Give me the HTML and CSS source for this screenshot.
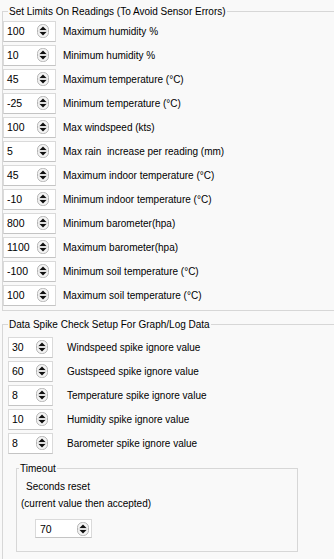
FILE: index.html
```html
<!DOCTYPE html>
<html lang="en">
<head>
  <meta charset="UTF-8">
  <title>Reading limits</title>
  <link rel="stylesheet" href="styles.css">
</head>
<body>
  <svg width="0" height="0" class="defs">
    <symbol id="spin" viewBox="0 0 12 14">
      <rect x="0.5" y="0.5" width="11" height="13" rx="5" fill="#f4f4f4" stroke="#b4b4b4" stroke-width="1"/>
      <path d="M2.5 6 L9.5 6 L6 2.5 Z" fill="#111"/>
      <path d="M2.5 8 L9.5 8 L6 11.5 Z" fill="#111"/>
      <line x1="1.5" y1="7" x2="10.5" y2="7" stroke="#c8c8c8" stroke-width="1"/>
    </symbol>
  </svg>

  <div class="group limits">
    <div class="group-title">Set Limits On Readings (To Avoid Sensor Errors)</div>
    <div class="rows">
      <div class="row"><div class="spin"><span class="val">100</span><svg class="arrows"><use href="#spin"/></svg></div><span class="label">Maximum humidity %</span></div>
      <div class="row"><div class="spin"><span class="val">10</span><svg class="arrows"><use href="#spin"/></svg></div><span class="label">Minimum humidity %</span></div>
      <div class="row"><div class="spin"><span class="val">45</span><svg class="arrows"><use href="#spin"/></svg></div><span class="label">Maximum temperature (°C)</span></div>
      <div class="row"><div class="spin"><span class="val">-25</span><svg class="arrows"><use href="#spin"/></svg></div><span class="label">Minimum temperature (°C)</span></div>
      <div class="row"><div class="spin"><span class="val">100</span><svg class="arrows"><use href="#spin"/></svg></div><span class="label">Max windspeed (kts)</span></div>
      <div class="row"><div class="spin"><span class="val">5</span><svg class="arrows"><use href="#spin"/></svg></div><span class="label">Max rain&nbsp; increase per reading (mm)</span></div>
      <div class="row"><div class="spin"><span class="val">45</span><svg class="arrows"><use href="#spin"/></svg></div><span class="label">Maximum indoor temperature (°C)</span></div>
      <div class="row"><div class="spin"><span class="val">-10</span><svg class="arrows"><use href="#spin"/></svg></div><span class="label">Minimum indoor temperature (°C)</span></div>
      <div class="row"><div class="spin"><span class="val">800</span><svg class="arrows"><use href="#spin"/></svg></div><span class="label">Minimum barometer(hpa)</span></div>
      <div class="row"><div class="spin"><span class="val">1100</span><svg class="arrows"><use href="#spin"/></svg></div><span class="label">Maximum barometer(hpa)</span></div>
      <div class="row"><div class="spin"><span class="val">-100</span><svg class="arrows"><use href="#spin"/></svg></div><span class="label">Minimum soil temperature (°C)</span></div>
      <div class="row"><div class="spin"><span class="val">100</span><svg class="arrows"><use href="#spin"/></svg></div><span class="label">Maximum soil temperature (°C)</span></div>
    </div>
  </div>

  <div class="group spikes">
    <div class="group-title">Data Spike Check Setup For Graph/Log Data</div>
    <div class="rows">
      <div class="row"><div class="spin"><span class="val">30</span><svg class="arrows"><use href="#spin"/></svg></div><span class="label">Windspeed spike ignore value</span></div>
      <div class="row"><div class="spin"><span class="val">60</span><svg class="arrows"><use href="#spin"/></svg></div><span class="label">Gustspeed spike ignore value</span></div>
      <div class="row"><div class="spin"><span class="val">8</span><svg class="arrows"><use href="#spin"/></svg></div><span class="label">Temperature spike ignore value</span></div>
      <div class="row"><div class="spin"><span class="val">10</span><svg class="arrows"><use href="#spin"/></svg></div><span class="label">Humidity spike ignore value</span></div>
      <div class="row"><div class="spin"><span class="val">8</span><svg class="arrows"><use href="#spin"/></svg></div><span class="label">Barometer spike ignore value</span></div>
    </div>

    <div class="group timeout">
      <div class="group-title">Timeout</div>
      <div class="note seconds">Seconds reset</div>
      <div class="note accepted">(current value then accepted)</div>
      <div class="spin"><span class="val">70</span><svg class="arrows"><use href="#spin"/></svg></div>
    </div>
  </div>
</body>
</html>
```

FILE: styles.css
```css
* {
  margin: 0;
  padding: 0;
  box-sizing: border-box;
}

html, body {
  width: 334px;
  height: 559px;
  overflow: hidden;
  background: #f9f9f9;
  color: #000;
  font-family: "Liberation Sans", Arial, sans-serif;
  font-size: 10px;
}

.defs {
  position: absolute;
}

.group {
  border: 1px solid #d7d7d7;
}

.group-title {
  display: table;
  margin: -6px 0 0 5px;
  padding: 0 1px;
  line-height: 12px;
  background: #f9f9f9;
}

.limits {
  width: 345px;
  margin: 11px 0 0 2px;
  padding-bottom: 3px;
}

.limits .rows {
  padding-top: 1px;
}

.spikes {
  width: 345px;
  margin: 13px 0 0 2px;
  padding-bottom: 7px;
  border-bottom: none;
}

.spikes .rows {
  padding-top: 4px;
}

.row {
  display: flex;
  align-items: center;
  height: 24px;
}

.spin {
  display: flex;
  align-items: center;
  height: 21px;
  background: #fff;
  border: 1px solid #dadada;
  border-bottom-color: #c4c4c4;
}

.val {
  flex: 1;
  padding-left: 3px;
  font-size: 10.5px;
}

.arrows {
  width: 12px;
  height: 14px;
}

.limits .spin {
  width: 53px;
}

.limits .arrows {
  margin-right: 6px;
}

.limits .label {
  margin-left: 7px;
}

.spikes .rows .spin {
  width: 45px;
  margin-left: 5px;
}

.spikes .rows .arrows {
  margin-right: 4px;
}

.spikes .label {
  margin-left: 14px;
}

.timeout {
  width: 282px;
  margin: 13px 0 0 13px;
  padding-bottom: 13px;
}

.timeout .group-title {
  margin-left: 2px;
}

.note {
  line-height: 14px;
  padding-left: 4px;
}

.seconds {
  margin-top: 5px;
  padding-left: 9px;
}

.accepted {
  margin-top: 3px;
}

.timeout .spin {
  width: 57px;
  height: 19px;
  margin: 8px 0 0 18px;
}

.timeout .val {
  padding-left: 4px;
}

.timeout .arrows {
  margin-right: 2px;
}
```
